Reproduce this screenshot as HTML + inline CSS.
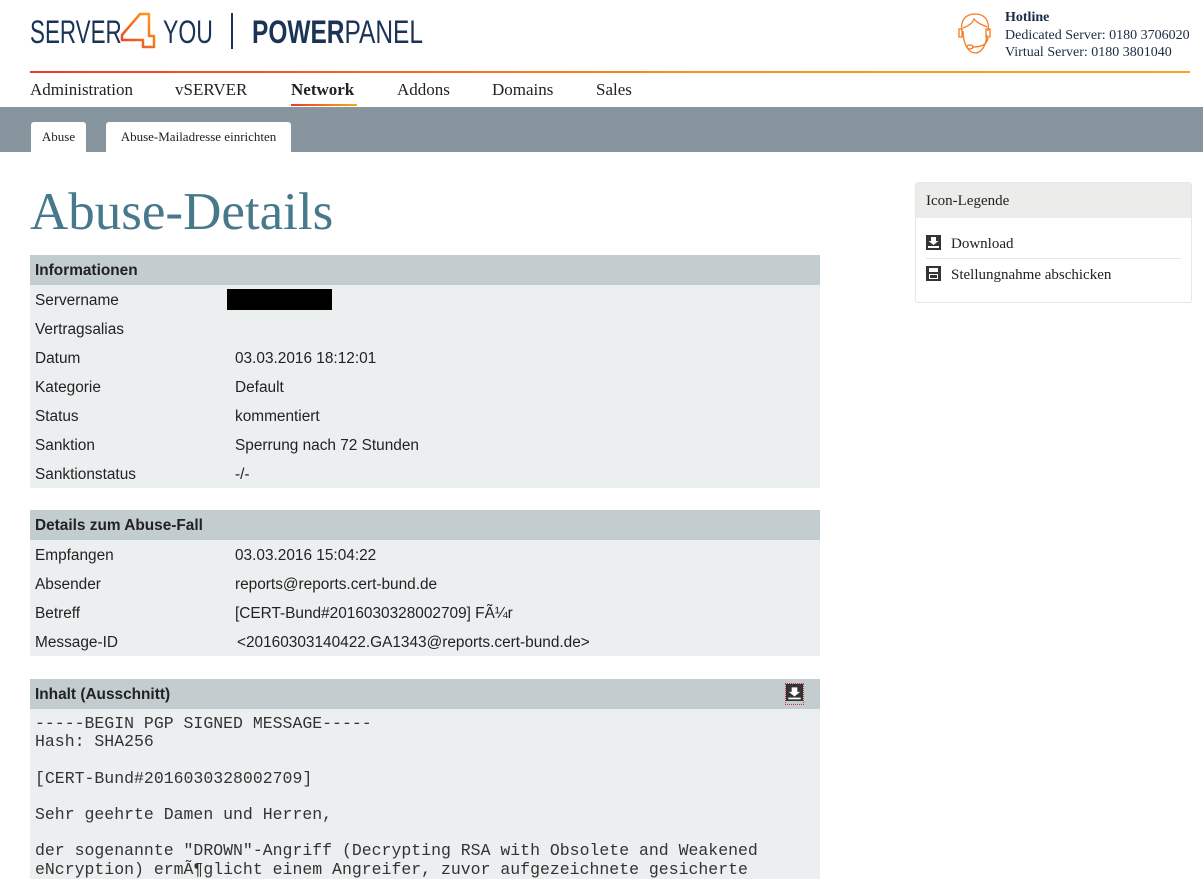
<!DOCTYPE html>
<html><head><meta charset="utf-8"><style>
*{margin:0;padding:0;box-sizing:border-box}
body{width:1203px;height:868px;overflow:hidden;background:#fff;font-family:"Liberation Serif",serif;color:#222;position:relative}
.abs{position:absolute}
.lg{position:absolute;top:12px;font-family:"Liberation Sans",sans-serif;font-size:32px;line-height:40px;color:#1b3357;white-space:nowrap;transform-origin:0 0}
.line{left:30px;top:71px;width:1160px;height:2px;background:linear-gradient(90deg,#ef3b2a,#f7941d 60%,#f9a51a)}
.nav{top:80px;font-size:17px;color:#222}
.band{left:0;top:107px;width:1203px;height:45px;background:#87969e}
.tab{top:122px;height:30px;background:#fff;border-radius:3px 3px 0 0;font-size:13px;line-height:30px;text-align:center;color:#222}
h1{position:absolute;left:30px;top:182px;font-weight:normal;font-size:53px;color:#47798d;font-family:"Liberation Serif",serif}
.tbl{position:absolute;left:30px;width:790px;background:#eceff0;font-family:"Liberation Sans",sans-serif;font-size:15.4px;color:#222}
.hd{height:30px;background:#c3cdcf;font-weight:bold;line-height:31px;padding-left:5px;position:relative}
.r{height:29px;line-height:32px;position:relative;padding-left:5px}
.r span{position:absolute;left:205px}
pre{font-family:"Liberation Mono",monospace;font-size:16.5px;line-height:18.2px;padding:6px 5px 5px;color:#333}
.side{left:915px;top:182px;width:277px;height:121px;border:1px solid #e6e6e6;border-radius:3px}
.side .h{height:35px;background:#ececea;font-size:15px;line-height:37px;padding-left:10px}
.it{font-size:15px;margin-left:10px;width:255px;height:31px;line-height:33px;padding-left:25px;position:relative}
.ic{position:absolute;left:0;top:7px}
</style></head><body>
<div class="lg" style="left:30px;transform:scaleX(.7)">SERVER</div>
<svg class="abs" style="left:119px;top:12px" width="40" height="38" viewBox="0 0 40 38"><defs><linearGradient id="g" x1="0" y1="1" x2="1" y2="0"><stop offset="0" stop-color="#ef3b2a"/><stop offset="1" stop-color="#f9a51a"/></linearGradient></defs><path d="M21 2 L30 2 L30 24 L35 24 L35 35 L24 35 L24 28 L3 28 L3 23 Z" fill="none" stroke="url(#g)" stroke-width="2.5" stroke-linejoin="round"/></svg>
<div class="lg" style="left:163px;transform:scaleX(.72)">YOU</div>
<div class="abs" style="left:231px;top:13px;width:2px;height:36px;background:#1b3357"></div>
<div class="lg" style="left:252px;transform:scaleX(.765)"><b>POWER</b>PANEL</div>
<svg class="abs" style="left:955px;top:11px" width="40" height="46" viewBox="0 0 40 46"><g fill="none" stroke="#f47b20" stroke-width="1.3"><path d="M7 20 C5 9 11 3 20 3 C29 3 35 9 33 20"/><path d="M8 20 C8 32 13 42 20 42 C27 42 31 34 32 24"/><path d="M8 17 C13 15 18 12 19 8 C23 13 28 14 32 16"/><path d="M4 18 L7 18 L7 26 L4 26 Z M31 18 L35 18 L35 26 L31 26 Z"/><path d="M33 27 C32 34 26 36 17 36"/><ellipse cx="15" cy="36" rx="3" ry="2"/></g></svg>
<div class="abs" style="left:1005px;top:9px;font-size:14px;line-height:17.5px;color:#1b2b45"><b>Hotline</b><br>Dedicated Server: 0180 3706020<br>Virtual Server: 0180 3801040</div>
<div class="abs line"></div>
<div class="abs nav" style="left:30px">Administration</div>
<div class="abs nav" style="left:175px">vSERVER</div>
<div class="abs nav" style="left:291px;font-weight:bold">Network</div>
<div class="abs" style="left:291px;top:104px;width:66px;height:2px;background:linear-gradient(90deg,#ef3b2a,#f9a51a)"></div>
<div class="abs nav" style="left:397px">Addons</div>
<div class="abs nav" style="left:492px">Domains</div>
<div class="abs nav" style="left:596px">Sales</div>
<div class="abs band"></div>
<div class="abs tab" style="left:31px;width:55px">Abuse</div>
<div class="abs tab" style="left:106px;width:185px">Abuse-Mailadresse einrichten</div>
<h1>Abuse-Details</h1>
<div class="tbl" style="top:255px;height:233px"><div class="hd">Informationen</div>
<div class="r">Servername<span style="left:197px;top:4px;width:105px;height:21px;background:#000"></span></div>
<div class="r">Vertragsalias</div>
<div class="r">Datum<span>03.03.2016 18:12:01</span></div>
<div class="r">Kategorie<span>Default</span></div>
<div class="r">Status<span>kommentiert</span></div>
<div class="r">Sanktion<span>Sperrung nach 72 Stunden</span></div>
<div class="r">Sanktionstatus<span>-/-</span></div></div>
<div class="tbl" style="top:510px;height:146px"><div class="hd">Details zum Abuse-Fall</div>
<div class="r">Empfangen<span>03.03.2016 15:04:22</span></div>
<div class="r">Absender<span>reports@reports.cert-bund.de</span></div>
<div class="r">Betreff<span>[CERT-Bund#2016030328002709] FÃ¼r</span></div>
<div class="r">Message-ID<span style="left:207px">&lt;20160303140422.GA1343@reports.cert-bund.de&gt;</span></div></div>
<div class="tbl" style="top:679px;height:200px"><div class="hd">Inhalt (Ausschnitt)<div style="position:absolute;right:16px;top:4px;width:19px;height:22px;border:1px dotted #c33"><svg width="17" height="17" viewBox="0 0 15 15" style="display:block"><rect width="15" height="15" fill="#333"/><path d="M5 3 H10 V7 H12.5 L7.5 11 L2.5 7 H5 Z" fill="#fff"/><rect x="2" y="12" width="11" height="1.5" fill="#fff"/></svg></div></div>
<pre>-----BEGIN PGP SIGNED MESSAGE-----
Hash: SHA256

[CERT-Bund#2016030328002709]

Sehr geehrte Damen und Herren,

der sogenannte "DROWN"-Angriff (Decrypting RSA with Obsolete and Weakened
eNcryption) ermÃ¶glicht einem Angreifer, zuvor aufgezeichnete gesicherte</pre></div>
<div class="abs side"><div class="h">Icon-Legende</div>
<div style="height:10px"></div>
<div class="it" style="border-bottom:1px solid #e6e6e6"><svg class="ic" width="15" height="15" viewBox="0 0 15 15"><rect width="15" height="15" fill="#333"/><path d="M5 2 H10 V6 H12.5 L7.5 10 L2.5 6 H5 Z" fill="#fff"/><rect x="2" y="11" width="11" height="2" fill="#fff"/></svg>Download</div>
<div class="it"><svg class="ic" width="15" height="15" viewBox="0 0 15 15"><rect width="15" height="15" fill="#333"/><rect x="3" y="2" width="9" height="4" fill="#fff"/><rect x="3" y="8" width="9" height="5" fill="#fff"/><rect x="4" y="9" width="7" height="3" fill="#333"/></svg>Stellungnahme abschicken</div></div>
</body></html>
